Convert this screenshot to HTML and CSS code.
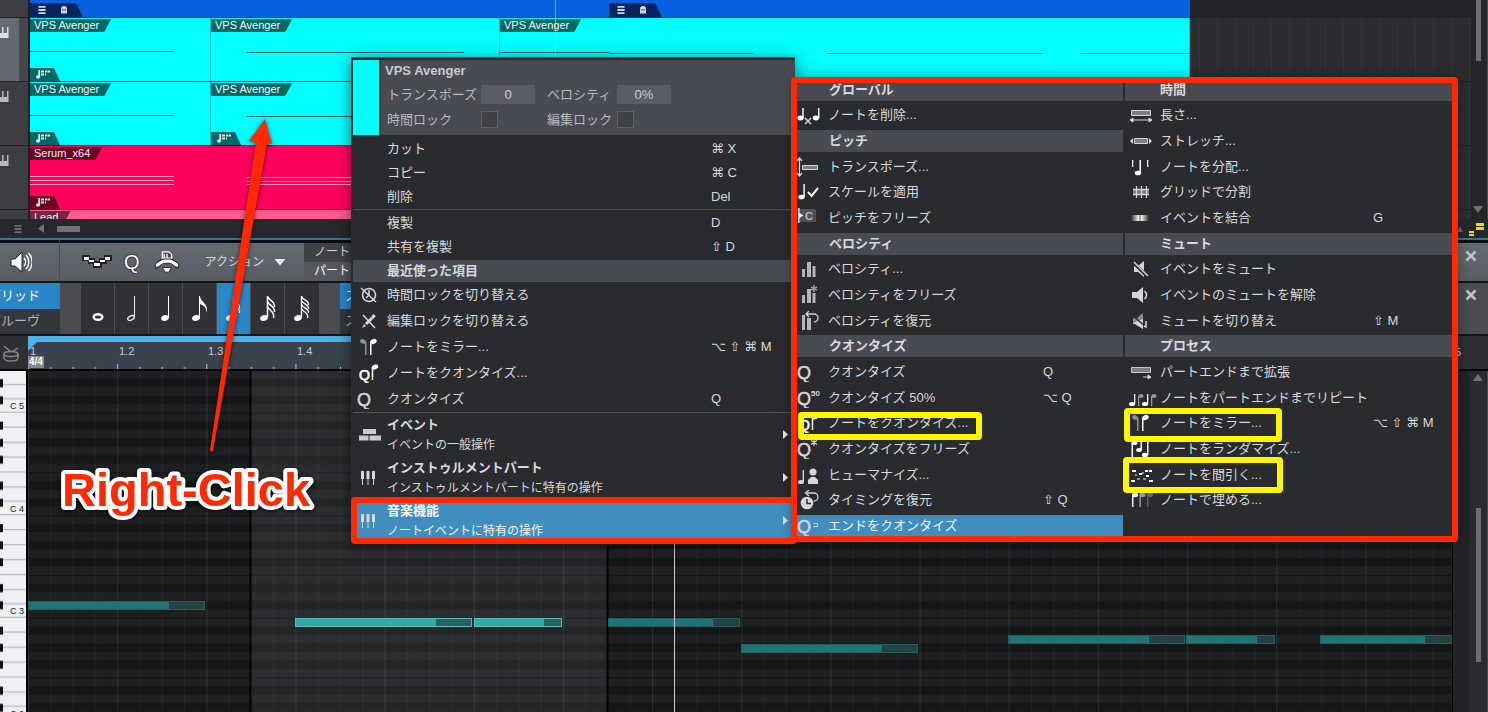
FILE: index.html
```html
<!DOCTYPE html>
<html lang="ja">
<head>
<meta charset="utf-8">
<title>ノートエディター</title>
<link rel="stylesheet" href="styles.css">
</head>
<body>
<svg class="defs" aria-hidden="true">
  <defs>
    <symbol id="i-keys" viewBox="0 0 9 11"><path d="M0 6h2V0h1.500v6h3.500V0h1.500v11H0z" fill="currentColor"/></symbol>
    <symbol id="i-list" viewBox="0 0 8 9"><path d="M0 0h8v2H0zM0 3.500h8v2H0zM0 7h8v2H0z" fill="currentColor"/></symbol>
    <symbol id="i-ghost" viewBox="0 0 6 8"><path d="M0 8V3a3 3 0 0 1 6 0v5L4.500 7 3 8 1.500 7z" fill="currentColor"/><path d="M1.500 3h1v1.500h-1zM3.500 3h1v1.500h-1z" fill="#03265f"/></symbol>
    <symbol id="i-part" viewBox="0 0 14 9"><ellipse cx="2" cy="7" rx="2" ry="1.700" fill="currentColor"/><path d="M3.200 7V0M5 1.500h3M5 4.500h3M9 1.500h2M11.500 1.500h2.500M9 4.500h1" stroke="currentColor" stroke-width="1.800" fill="none"/></symbol>
    <symbol id="i-q" viewBox="0 0 24 20"><text x="0" y="17" class="q">Q</text></symbol>
    <symbol id="i-q50" viewBox="0 0 24 20"><text x="0" y="17" class="q">Q</text><text x="14" y="8" class="q-sup">50</text></symbol>
    <symbol id="i-qstar" viewBox="0 0 24 20"><text x="0" y="17" class="q">Q</text><path d="M17 0v7M14 1.500l6 4M20 1.500l-6 4" stroke="currentColor" stroke-width="1.200"/></symbol>
    <symbol id="i-qend" viewBox="0 0 24 20"><text x="0" y="17" class="q">Q</text><path d="M16.500 7.500h4v3h-4" fill="none" stroke="currentColor"/></symbol>
    <symbol id="i-qnote" viewBox="0 0 24 20"><text x="2" y="17" class="q-small">Q</text><path d="M15.500 17V4" stroke="#fff" stroke-width="1.500"/><ellipse cx="18" cy="4" rx="3.300" ry="2.300" fill="#fff" transform="rotate(-20 18 4)"/></symbol>
    <symbol id="i-clock-off" viewBox="0 0 24 20"><g fill="none" stroke="currentColor" stroke-width="1.500"><circle cx="12" cy="10" r="6.500"/><path d="M12 5v5l-3 3M4 3l15 14"/></g></symbol>
    <symbol id="i-edit-off" viewBox="0 0 24 20"><path d="M6 4l12 13" stroke="currentColor" stroke-width="1.500"/><path d="M9 13l6-6" stroke="currentColor" stroke-width="3"/><path d="M16 3l3 2-3 3-2-2zM5 17l2-4 2 2z" fill="currentColor"/></symbol>
    <symbol id="i-mirror" viewBox="0 0 24 20"><g fill="#8f9094"><ellipse cx="6" cy="4.500" rx="3" ry="2.200" transform="rotate(20 6 4.500)"/><path d="M8 5h1.500v13H8z"/></g><g fill="#fff"><ellipse cx="16.500" cy="4.500" rx="3.300" ry="2.500" transform="rotate(-20 16.500 4.500)"/><path d="M13 5h1.500v13H13z"/></g></symbol>
    <symbol id="i-bricks" viewBox="0 0 24 20"><path d="M6 4h13v5H6zM2 10.500h9.500v5H2zM12.500 10.500H24v5H12.500z" fill="#c9cacd"/></symbol>
    <symbol id="i-pins" viewBox="0 0 24 20"><path d="M4 3h3v8H6v6H5v-6H4zM9.500 3h3v8h-1v6h-1v-6h-1zM15 3h3v8h-1v6h-1v-6h-1z" fill="currentColor"/></symbol>
    <symbol id="i-delete-note" viewBox="0 0 24 20"><g fill="#fff"><ellipse cx="3.500" cy="13" rx="3.200" ry="2.400"/><path d="M5.300 3h1.400v10H5.300z"/><ellipse cx="19" cy="13" rx="3.200" ry="2.400"/><path d="M21 3h1.400v10H21z"/></g><path d="M8 13l6 6M14 13l-6 6" stroke="#d5d6d8" stroke-width="1.500"/></symbol>
    <symbol id="i-transpose" viewBox="0 0 24 20"><path d="M2.500 1v18M0 4l2.500-3L5 4M0 16l2.500 3L5 16" fill="none" stroke="currentColor" stroke-width="1.200"/><path d="M5.500 8.500h15v4h-15z" fill="#7d7e82" stroke="#d5d6d8"/></symbol>
    <symbol id="i-scale" viewBox="0 0 24 20"><g fill="#fff"><ellipse cx="4.500" cy="15" rx="3.200" ry="2.300"/><path d="M6.400 2h1.400v13H6.400z"/></g><path d="M11 10l3.500 4L21 6" fill="none" stroke="#fff" stroke-width="2"/></symbol>
    <symbol id="i-pitch-freeze" viewBox="0 0 24 20"><path d="M2 1h17v13H2z" fill="#505258"/><path d="M1 0h1.500v15H1zM2.500 5l4 2.500-4 2.500z" fill="#eee"/><text x="8" y="12" class="q-mini">C</text></symbol>
    <symbol id="i-bars" viewBox="0 0 24 20"><path d="M5 10h3v8H5zM10 3h4v15h-4zM15.500 7h3v11h-3z" fill="#b5b6b9"/></symbol>
    <symbol id="i-bars-star" viewBox="0 0 24 20"><path d="M5 10h3v8H5zM10 4h4v14h-4zM15.500 8h3v10h-3z" fill="#b5b6b9"/><path d="M17 0v7M14 2l6 3M20 2l-6 3" stroke="#a0a1a4" stroke-width="1.500"/></symbol>
    <symbol id="i-bars-undo" viewBox="0 0 24 20"><path d="M5 4h3v15H5zM10 7h4v12h-4z" fill="#b5b6b9"/><path d="M9 3h8a4 4 0 0 1 0 8M12 0L9 3l3 3" fill="none" stroke="currentColor" stroke-width="1.300"/></symbol>
    <symbol id="i-human" viewBox="0 0 24 20"><g fill="currentColor"><ellipse cx="4" cy="17" rx="3" ry="2"/><path d="M5.600 5H7v12H5.600z"/><circle cx="16" cy="7" r="3.500"/><path d="M11 19v-4l3-3h4l3 3v4z"/></g></symbol>
    <symbol id="i-time-undo" viewBox="0 0 24 20"><circle cx="10" cy="13" r="6.300" fill="currentColor"/><path d="M10 9v4.500h4" fill="none" stroke="#292b2e" stroke-width="1.500"/><path d="M10 3h7a4 4 0 0 1 0 8M12 0L8.500 3 12 6" fill="none" stroke="currentColor" stroke-width="1.300"/></symbol>
    <symbol id="i-length" viewBox="0 0 24 20"><path d="M2.500 5.500h19v5h-19z" fill="#7d7e82" stroke="#d5d6d8"/><path d="M3 15h18M4 13l-3 2 3 2zM20 13l3 2-3 2z" fill="currentColor" stroke="currentColor"/></symbol>
    <symbol id="i-stretch" viewBox="0 0 24 20"><path d="M5.500 7.500h13v5h-13z" fill="#7d7e82" stroke="#d5d6d8"/><path d="M4 7l-3 3 3 3zM20 7l3 3-3 3z" fill="currentColor"/></symbol>
    <symbol id="i-distribute" viewBox="0 0 24 20"><path d="M3 3h1.300v7H3zM18 3h1.300v7H18zM10.500 3H12v13h-1.500z" fill="#fff"/><ellipse cx="9" cy="16" rx="3.200" ry="2.300" fill="#fff"/></symbol>
    <symbol id="i-split" viewBox="0 0 24 20"><path d="M4 7h16v6H4z" fill="#77787c"/><path d="M4 7.500h16M4 12.500h16M7.500 4v12M12.500 4v12M17.500 4v12" stroke="currentColor" stroke-width="1.300"/></symbol>
    <linearGradient id="g-merge"><stop offset="0" stop-color="#292b2e"/><stop offset=".45" stop-color="#fff"/><stop offset=".55" stop-color="#fff"/><stop offset="1" stop-color="#292b2e"/></linearGradient>
    <symbol id="i-merge" viewBox="0 0 24 20"><path d="M2 7h18v6H2z" fill="url(#g-merge)"/><path d="M11 6v8" stroke="#444"/></symbol>
    <symbol id="i-mute" viewBox="0 0 24 20"><path d="M5 7h4l6-5v16l-6-5H5z" fill="currentColor"/><path d="M4 3l15 15" stroke="#292b2e" stroke-width="3.500"/><path d="M5 3l14 14" stroke="currentColor" stroke-width="1.500"/></symbol>
    <symbol id="i-unmute" viewBox="0 0 24 20"><path d="M3 7h5l6-5v16l-6-5H3z" fill="currentColor"/><path d="M15.500 6a5 5 0 0 1 0 8" fill="none" stroke="currentColor" stroke-width="1.500"/></symbol>
    <symbol id="i-mute-toggle" viewBox="0 0 24 20"><path d="M4 7h4l6-5v16l-6-5H4z" fill="#898a8e"/><path d="M4 12l10 6V8z" fill="#d5d6d8"/><path d="M3 4l14 12" stroke="#292b2e" stroke-width="1.500"/><path d="M17 10v6l-2-1" fill="none" stroke="#d5d6d8" stroke-width="1.500"/></symbol>
    <symbol id="i-extend" viewBox="0 0 24 20"><path d="M2.500 5.500h19v5h-19z" fill="#7d7e82" stroke="#c5c6c8"/><path d="M14 15h7M19 13l3 2-3 2z" stroke="currentColor" fill="currentColor"/></symbol>
    <symbol id="i-repeat" viewBox="0 0 28 20"><g fill="#fff"><ellipse cx="3" cy="16" rx="3" ry="2"/><path d="M5 6h1.300v10H5z"/><ellipse cx="16" cy="16" rx="3" ry="2"/><path d="M18 6h1.300v10H18z"/></g><g fill="#98999c"><ellipse cx="12" cy="8" rx="2.500" ry="2"/><path d="M9 8h1.300v10H9z"/><ellipse cx="25" cy="8" rx="2.500" ry="2"/><path d="M22 8h1.300v10H22z"/></g></symbol>
    <symbol id="i-random" viewBox="0 0 24 20"><g fill="#fff"><ellipse cx="5.500" cy="4" rx="3" ry="2"/><path d="M2.500 4H4v14H2.500z"/><ellipse cx="10" cy="11" rx="2.800" ry="2"/><path d="M11.500 3H13v8h-1.500z"/><ellipse cx="16" cy="16" rx="3" ry="2.200"/><path d="M18 3h1.500v13H18z"/></g></symbol>
    <symbol id="i-thin" viewBox="0 0 24 20"><path d="M3 5h4v2H3zM16 5h3v2h-3zM20 5h3v2h-3zM10 8h3v2h-3zM17 10h3v2h-3zM2 15h4v2H2zM20 15h4v2h-4z" fill="#fff"/><path d="M6 9h2v2H6zM8 13h3v2H8zM14 13h3v2h-3zM13 7h2v2h-2z" fill="#8b8c90"/></symbol>
    <symbol id="i-fill" viewBox="0 0 24 20"><g fill="#fff"><ellipse cx="6" cy="5" rx="3" ry="2.200"/><path d="M3 5h1.400v12H3z"/></g><g fill="#9a9b9e"><ellipse cx="13.500" cy="5" rx="3" ry="2.200"/><path d="M10.500 5h1.400v12h-1.400z"/></g><g fill="#626367"><ellipse cx="21" cy="5" rx="3" ry="2.200"/><path d="M18 5h1.400v12H18z"/></g></symbol>
  </defs>
</svg>

<main class="app">
  <section class="arrange" aria-label="アレンジ">
    <div class="tracks">
      <div class="track track-top"><div class="track-head"></div>
        <div class="lane">
          <div class="clip clip-blue clip-whole"></div>
          <div class="fold fold-a"><svg class="g-list"><use href="#i-list"/></svg><svg class="g-ghost"><use href="#i-ghost"/></svg></div>
          <div class="fold fold-b"><svg class="g-list"><use href="#i-list"/></svg><svg class="g-ghost"><use href="#i-ghost"/></svg></div>
        </div></div>
      <div class="track"><div class="track-head selected"><svg><use href="#i-keys"/></svg></div>
        <div class="lane">
          <div class="clip clip-cyan clip-1"><span class="name">VPS Avenger</span><i class="corner"><svg><use href="#i-part"/></svg></i></div>
          <div class="clip clip-cyan clip-2"><span class="name">VPS Avenger</span></div>
          <div class="clip clip-cyan clip-3"><span class="name">VPS Avenger</span></div>
          <svg class="lines"><path d="M0 33.500h144M217 34.500h217M470 34.500h109M579 35.500h145M797 35.500h216M1050 35.500h110" stroke="#0a6767"/></svg>
        </div></div>
      <div class="track"><div class="track-head"><svg><use href="#i-keys"/></svg></div>
        <div class="lane">
          <div class="clip clip-cyan clip-1"><span class="name">VPS Avenger</span><i class="corner"><svg><use href="#i-part"/></svg></i></div>
          <div class="clip clip-cyan clip-rest"><span class="name">VPS Avenger</span><i class="corner"><svg><use href="#i-part"/></svg></i></div>
          <svg class="lines"><path d="M0 33.500h144M217 34.500h217" stroke="#0a6767"/></svg>
        </div></div>
      <div class="track"><div class="track-head"><svg><use href="#i-keys"/></svg></div>
        <div class="lane">
          <div class="clip clip-pink clip-whole"><span class="name">Serum_x64</span><i class="corner"><svg><use href="#i-part"/></svg></i></div>
          <svg class="lines"><path d="M0 30.500h144M0 34.500h144M0 38.500h144M217 31.500h217M217 35.500h217M217 38.500h217" stroke="#ff9fc0"/></svg>
        </div></div>
      <div class="track track-last"><div class="track-head"></div>
        <div class="lane"><div class="clip clip-rose clip-whole"><span class="name">Lead</span></div></div></div>
      <i class="playhead playhead-top"></i>
    </div>
    <div class="vscroll"><i class="thumb"></i><i class="tri-down"></i></div>
  </section>
  <div class="hscroll">
    <svg class="g-list"><use href="#i-list"/></svg><i class="tri-left"></i><i class="thumb"></i>
    <svg class="zoomers" viewBox="0 0 30 18"><path d="M0 12l3-6 3 6z" fill="#66686c"/><path d="M19 3h8v3h-8zM19 7h8v3h-8zM12 11h5v2h-5zM12 14h5v2h-5z" fill="#f3d90b"/></svg>
  </div>

  <header class="toolbar">
    <button class="tool tool-speaker" aria-label="試聴"><svg viewBox="0 0 22 22"><path d="M1 8h4l7-7v20l-7-6H1z" fill="#fff" stroke="#222"/><path d="M14 7a6 6 0 0 1 0 8M16 4a10 10 0 0 1 0 14M18.500 2a13 13 0 0 1 0 18" fill="none" stroke="#fff" stroke-width="1.400"/></svg></button>
    <div class="tool-group">
      <button class="tool" aria-label="ステップ"><svg viewBox="0 0 30 22"><path d="M0 4h8v3h5v3h4V7h5V4h8v6h-5v3h-5v4h-9v-4H6v-3H0z" fill="#222"/><path d="M2 6h5v3H2zM7 9h5v2H7zM12 12h6v3h-6zM18 9h5v2h-5zM23 6h5v3h-5z" fill="#fff"/></svg></button>
      <button class="tool tool-q" aria-label="クオンタイズ">Q</button>
      <button class="tool" aria-label="ハンガー"><svg viewBox="0 0 26 26"><path d="M8 2h7l3 3v4H8zM10 4v4M13 4v4" fill="#444" stroke="#fff" stroke-width="1.500"/><path d="M0 18c4-1 5-6 9-6h8c4 0 5 5 9 6" fill="none" stroke="#222" stroke-width="5.500"/><path d="M1 17c4-1 5-5 9-5h6c4 0 5 4 9 5" fill="none" stroke="#fff" stroke-width="3.500"/><path d="M8 19h10l-3 5h-4z" fill="#fff" stroke="#222"/></svg></button>
      <button class="action">アクション<i class="tri-down"></i></button>
    </div>
    <div class="tabs"><button>ノート</button><button class="active">パート</button></div>
    <button class="close" aria-label="閉じる"><svg viewBox="0 0 12 12"><path d="M1.500 1.500l9 9M10.500 1.500l-9 9"/></svg></button>
  </header>

  <div class="values">
    <div class="modes"><button class="active">グリッド</button><button>グルーヴ</button></div>
    <div class="notes">
      <button aria-label="全音符"><svg viewBox="0 0 24 32"><ellipse cx="12" cy="24" rx="4.300" ry="2.800" fill="none" stroke="#fff" stroke-width="2.400"/></svg></button>
      <button aria-label="2分音符"><svg viewBox="0 0 24 32"><ellipse cx="11" cy="25" rx="3.500" ry="2" fill="none" stroke="#e8e8e8" stroke-width="1.300" transform="rotate(-25 11 25)"/><path d="M14.500 24V3" stroke="#e8e8e8"/></svg></button>
      <button aria-label="4分音符"><svg viewBox="0 0 24 32"><ellipse cx="11" cy="25" rx="4" ry="2.800" fill="#fff" transform="rotate(-20 11 25)"/><path d="M14.500 24V3" stroke="#fff"/></svg></button>
      <button aria-label="8分音符"><svg viewBox="0 0 24 32"><ellipse cx="8" cy="25" rx="4" ry="2.800" fill="#fff" transform="rotate(-20 8 25)"/><path d="M11.500 24V3" stroke="#fff"/><path d="M12 3c0 6 10 8 6 17 1-6-3-8-6-9z" fill="#fff"/></svg></button>
      <button class="active" aria-label="16分音符"><svg viewBox="0 0 24 32"><ellipse cx="8" cy="25" rx="4" ry="2.800" fill="#fff" transform="rotate(-20 8 25)"/><path d="M11.500 24V3c0 5 7 6 6 13M11.500 9c0 5 7 6 6 11" fill="none" stroke="#fff" stroke-width="1.300"/></svg></button>
      <button aria-label="32分音符"><svg viewBox="0 0 24 32"><ellipse cx="8" cy="25" rx="4" ry="2.800" fill="#fff" transform="rotate(-20 8 25)"/><path d="M11.500 24V3c0 4 8 5 7 11M11.500 8c0 4 8 5 7 11M11.500 13c0 4 8 5 6 12" fill="none" stroke="#fff" stroke-width="1.500"/></svg></button>
      <button aria-label="64分音符"><svg viewBox="0 0 24 32"><ellipse cx="8" cy="25" rx="4" ry="2.800" fill="#fff" transform="rotate(-20 8 25)"/><path d="M11.500 24V3c0 4 8 4 7 9M11.500 7c0 4 8 4 7 9M11.500 11c0 4 8 4 7 9M11.500 15c0 4 8 4 6 10" fill="none" stroke="#fff" stroke-width="1.300"/></svg></button>
    </div>
    <div class="modes modes-next"><button class="active">ス</button><button>ス</button></div>
    <button class="close" aria-label="閉じる"><svg viewBox="0 0 12 12"><path d="M1.500 1.500l9 9M10.500 1.500l-9 9"/></svg></button>
  </div>

  <div class="ruler">
    <div class="ruler-head"><svg viewBox="0 0 18 18"><g fill="none" stroke="#85878b" stroke-width="1.400"><ellipse cx="9" cy="10" rx="7" ry="2.500"/><path d="M2 10v4c0 4 14 4 14 0v-4M2 2l7 6M16 4L9 8"/></g></svg></div>
    <div class="ruler-scale">
      <svg class="ticks"><defs><pattern id="p-tick" width="89.150" height="34" patternUnits="userSpaceOnUse"><path d="M.500 28v6M22.800 31v3M45.100 31v3M67.400 31v3" stroke="#c4c8ce"/></pattern></defs><rect width="100%" height="100%" fill="url(#p-tick)"/><path d="M0 6h9L0 15z" fill="#4db0e8"/></svg>
      <span class="beat beat-1">1</span><span class="beat">1.2</span><span class="beat">1.3</span><span class="beat">1.4</span>
      <span class="meter">4/4</span>
    </div>
    <div class="ruler-end">5</div>
  </div>

  <section class="roll" aria-label="ピアノロール">
    <svg class="keyboard">
      <defs><pattern id="p-keys" width="28" height="102.500" patternUnits="userSpaceOnUse" patternTransform="translate(0 41.700)">
        <rect width="28" height="102.500" fill="#eef0f3"/>
        <path d="M0 14.500h28M0 29.500h28M0 44.500h28M0 59.500h28M0 74.500h28M0 88.500h28M0 102h28" stroke="#a9abb0"/>
        <path d="M0 9h3v8H0zM0 26h3v8H0zM0 43h3v8H0zM0 69h3v8H0zM0 86h3v8H0z" fill="#111"/></pattern></defs>
      <rect width="100%" height="100%" fill="url(#p-keys)"/>
      <g class="octave"><text x="10" y="38">C 5</text><text x="10" y="141">C 4</text><text x="10" y="243">C 3</text><text x="10" y="346">C 2</text></g>
    </svg>
    <div class="canvas">
      <svg class="grid">
        <defs>
          <pattern id="p-rows" width="22.290" height="12" patternUnits="userSpaceOnUse" patternTransform="translate(0 41.700) scale(1 8.540)">
            <rect width="23" height="12" fill="#1e1f21"/>
            <path d="M0 1h23v1H0zM0 3h23v1H0zM0 5h23v1H0zM0 8h23v1H0zM0 10h23v1H0z" fill="#151617"/>
            <path d="M0 0h23v.150H0zM0 7h23v.100H0z" fill="#121314"/>
            <path d="M0 0h1v12H0z" fill="#fff" fill-opacity=".03"/>
          </pattern>
          <pattern id="p-beats" width="89.150" height="10" patternUnits="userSpaceOnUse"><path d="M0 0h1v10H0z" fill="#fff" fill-opacity=".05"/></pattern>
        </defs>
        <rect width="100%" height="100%" fill="url(#p-rows)"/>
        <rect x="223" width="356" height="100%" fill="#eef" fill-opacity=".07"/>
        <rect width="100%" height="100%" fill="url(#p-beats)"/>
        <path d="M222.500 0v2000M579.500 0v2000" stroke="#000" stroke-width="2"/>
      </svg>
      <i class="note n1"></i><i class="note bright n2"></i><i class="note bright n3"></i><i class="note n4"></i>
      <i class="note n5"></i><i class="note n6"></i><i class="note n7"></i><i class="note n8"></i>
      <i class="playhead playhead-roll"></i>
    </div>
    <div class="vscroll"><i class="tri-up"></i><i class="thumb"></i></div>
  </section>

  <nav class="menu main-menu" aria-label="コンテキストメニュー">
    <form class="info">
      <i class="swatch"></i>
      <div class="info-body">
        <strong class="info-title">VPS Avenger</strong>
        <div class="fields">
          <label for="transpose">トランスポーズ</label><input id="transpose" type="text" value="0">
          <label for="velocity">ベロシティ</label><input id="velocity" type="text" value="0%">
          <label for="timelock">時間ロック</label><input id="timelock" type="checkbox">
          <label for="editlock">編集ロック</label><input id="editlock" type="checkbox">
        </div>
      </div>
    </form>
    <div class="group tight">
      <button class="item"><span class="label">カット</span><kbd>⌘ X</kbd></button>
      <button class="item"><span class="label">コピー</span><kbd>⌘ C</kbd></button>
      <button class="item"><span class="label">削除</span><kbd>Del</kbd></button>
    </div>
    <div class="group tight ruled">
      <button class="item"><span class="label">複製</span><kbd>D</kbd></button>
      <button class="item"><span class="label">共有を複製</span><kbd>⇧ D</kbd></button>
    </div>
    <h2 class="section">最近使った項目</h2>
    <div class="group">
      <button class="item"><svg><use href="#i-clock-off"/></svg><span class="label">時間ロックを切り替える</span></button>
      <button class="item"><svg><use href="#i-edit-off"/></svg><span class="label">編集ロックを切り替える</span></button>
      <button class="item"><svg><use href="#i-mirror"/></svg><span class="label">ノートをミラー...</span><kbd>⌥ ⇧ ⌘ M</kbd></button>
      <button class="item"><svg><use href="#i-qnote"/></svg><span class="label">ノートをクオンタイズ...</span></button>
      <button class="item"><svg><use href="#i-q"/></svg><span class="label">クオンタイズ</span><kbd>Q</kbd></button>
    </div>
    <div class="group ruled">
      <button class="item tall"><svg><use href="#i-bricks"/></svg><span class="label"><b>イベント</b><small>イベントの一般操作</small></span><i class="tri-right"></i></button>
      <button class="item tall"><svg><use href="#i-pins"/></svg><span class="label"><b>インストゥルメントパート</b><small>インストゥルメントパートに特有の操作</small></span><i class="tri-right"></i></button>
      <button class="item tall current"><svg><use href="#i-pins"/></svg><span class="label"><b>音楽機能</b><small>ノートイベントに特有の操作</small></span><i class="tri-right"></i></button>
    </div>
  </nav>

  <nav class="menu sub-menu" aria-label="音楽機能">
    <div class="column">
      <h2 class="section">グローバル</h2>
      <button class="item"><svg><use href="#i-delete-note"/></svg><span class="label">ノートを削除...</span></button>
      <h2 class="section">ピッチ</h2>
      <button class="item"><svg><use href="#i-transpose"/></svg><span class="label">トランスポーズ...</span></button>
      <button class="item"><svg><use href="#i-scale"/></svg><span class="label">スケールを適用</span></button>
      <button class="item"><svg><use href="#i-pitch-freeze"/></svg><span class="label">ピッチをフリーズ</span></button>
      <h2 class="section">ベロシティ</h2>
      <button class="item"><svg><use href="#i-bars"/></svg><span class="label">ベロシティ...</span></button>
      <button class="item"><svg><use href="#i-bars-star"/></svg><span class="label">ベロシティをフリーズ</span></button>
      <button class="item"><svg><use href="#i-bars-undo"/></svg><span class="label">ベロシティを復元</span></button>
      <h2 class="section">クオンタイズ</h2>
      <button class="item"><svg><use href="#i-q"/></svg><span class="label">クオンタイズ</span><kbd>Q</kbd></button>
      <button class="item"><svg><use href="#i-q50"/></svg><span class="label">クオンタイズ 50%</span><kbd>⌥ Q</kbd></button>
      <button class="item"><svg><use href="#i-qnote"/></svg><span class="label">ノートをクオンタイズ...</span></button>
      <button class="item"><svg><use href="#i-qstar"/></svg><span class="label">クオンタイズをフリーズ</span></button>
      <button class="item"><svg><use href="#i-human"/></svg><span class="label">ヒューマナイズ...</span></button>
      <button class="item"><svg><use href="#i-time-undo"/></svg><span class="label">タイミングを復元</span><kbd>⇧ Q</kbd></button>
      <button class="item current"><svg><use href="#i-qend"/></svg><span class="label">エンドをクオンタイズ</span></button>
    </div>
    <div class="column">
      <h2 class="section">時間</h2>
      <button class="item"><svg><use href="#i-length"/></svg><span class="label">長さ...</span></button>
      <button class="item"><svg><use href="#i-stretch"/></svg><span class="label">ストレッチ...</span></button>
      <button class="item"><svg><use href="#i-distribute"/></svg><span class="label">ノートを分配...</span></button>
      <button class="item"><svg><use href="#i-split"/></svg><span class="label">グリッドで分割</span></button>
      <button class="item"><svg><use href="#i-merge"/></svg><span class="label">イベントを結合</span><kbd>G</kbd></button>
      <h2 class="section">ミュート</h2>
      <button class="item"><svg><use href="#i-mute"/></svg><span class="label">イベントをミュート</span></button>
      <button class="item"><svg><use href="#i-unmute"/></svg><span class="label">イベントのミュートを解除</span></button>
      <button class="item"><svg><use href="#i-mute-toggle"/></svg><span class="label">ミュートを切り替え</span><kbd>⇧ M</kbd></button>
      <h2 class="section">プロセス</h2>
      <button class="item"><svg><use href="#i-extend"/></svg><span class="label">パートエンドまで拡張</span></button>
      <button class="item"><svg class="wide"><use href="#i-repeat"/></svg><span class="label">ノートをパートエンドまでリピート</span></button>
      <button class="item"><svg><use href="#i-mirror"/></svg><span class="label">ノートをミラー...</span><kbd>⌥ ⇧ ⌘ M</kbd></button>
      <button class="item"><svg><use href="#i-random"/></svg><span class="label">ノートをランダマイズ...</span></button>
      <button class="item"><svg><use href="#i-thin"/></svg><span class="label">ノートを間引く...</span></button>
      <button class="item"><svg><use href="#i-fill"/></svg><span class="label">ノートで埋める...</span></button>
    </div>
  </nav>

  <i class="mark mark-sub"></i><i class="mark mark-item"></i>
  <i class="mark yellow mark-quantize"></i><i class="mark yellow mark-mirror"></i><i class="mark yellow mark-thin"></i>
  <svg class="callout" viewBox="0 0 360 420">
    <path class="arrow" d="M265 19L272 44 267 43 213 351Q211 353 210 350L256 42 249 41z"/>
    <text x="62" y="406">Right-Click</text>
  </svg>
</main>
</body>
</html>
```
FILE: styles.css
```css
* { box-sizing: border-box; }

body {
  margin: 0;
  background: #1e1f21;
  color: #d8d9db;
  font: 13px/20px "Liberation Sans", "Noto Sans CJK JP", sans-serif;
}

button {
  margin: 0;
  padding: 0;
  border: 0;
  background: none;
  color: inherit;
  font: inherit;
  text-align: left;
}

h2 { margin: 0; font-size: 13px; }
i { display: block; font-style: normal; }
svg { display: block; flex: none; }
.defs { position: absolute; width: 0; height: 0; }

.app {
  position: relative;
  display: flex;
  flex-direction: column;
  min-height: 100vh;
  overflow: hidden;
}

/* Triangles */
.tri-down, .tri-up, .tri-left, .tri-right { background: #707276; }
.tri-down { width: 10px; height: 7px; clip-path: polygon(0 0, 100% 0, 50% 100%); }
.tri-up { width: 10px; height: 7px; clip-path: polygon(50% 0, 100% 100%, 0 100%); }
.tri-left { width: 6px; height: 9px; clip-path: polygon(0 50%, 100% 0, 100% 100%); }
.tri-right { width: 5px; height: 9px; background: #e2e2e4; clip-path: polygon(0 0, 100% 50%, 0 100%); }

/* Arrangement */
.arrange { display: flex; height: 219px; background: #2c2d30; }
.tracks { position: relative; flex: 1; display: flex; flex-direction: column; overflow: hidden; }
.track { display: flex; height: 64px; border-bottom: 1px solid #16282c; }
.track-top { height: 18px; }
.track-last { flex: 1; border: 0; }
.track-head {
  width: 30px;
  padding-top: 9px;
  border-right: 2px solid #1d1e20;
  background: #3c3e42;
  color: #b9babd;
}
.track-head svg { width: 9px; height: 11px; }
.track-head.selected {
  background: linear-gradient(90deg, #656971 19px, #45474c 19px);
  color: #dedfe1;
}
.lane {
  position: relative;
  flex: 1;
  background: repeating-linear-gradient(90deg, #2c2d30 0 17px, #333437 17px 18px);
}
.track-top .lane { background: #242528; }
.clip { position: absolute; top: 0; bottom: 0; overflow: hidden; }
.clip-whole { left: 0; width: 1160px; }
.clip-1 { left: 0; width: 181px; }
.clip-2 { left: 181px; width: 289px; }
.clip-3 { left: 470px; width: 690px; }
.clip-rest { left: 181px; width: 979px; }
.clip-blue { background: #0662e0; }
.clip-cyan { background: #04fdff; border-right: 1px solid #07bcc0; --tab: #046867; }
.clip-pink { background: #ff005c; --tab: #6b0026; }
.clip-rose { background: #ff5a92; --tab: #72263f; }
.name {
  display: block;
  width: max-content;
  height: 13px;
  margin-top: 1px;
  padding: 0 12px 0 4px;
  background: var(--tab);
  color: #f1f5f5;
  font-size: 11px;
  line-height: 13px;
  clip-path: polygon(0 0, 100% 0, calc(100% - 7px) 100%, 0 100%);
}
.corner {
  position: absolute;
  left: 0;
  bottom: 0;
  width: 30px;
  height: 13px;
  padding: 2px 6px;
  background: var(--tab);
  color: #dfe8e8;
  clip-path: polygon(0 0, 24px 0, 100% 100%, 0 100%);
}
.corner svg { width: 14px; height: 9px; }
.lines { position: absolute; inset: 0; width: 100%; height: 100%; }
.fold {
  position: absolute;
  bottom: 0;
  display: flex;
  align-items: center;
  gap: 15px;
  width: 53px;
  height: 14px;
  padding-left: 8px;
  background: #03265f;
  color: #d2d6de;
  clip-path: polygon(0 0, 46px 0, 100% 100%, 0 100%);
}
.fold-a { left: 0; }
.fold-b { left: 579px; }
.g-list { width: 8px; height: 8px; }
.g-ghost { width: 6px; height: 8px; }
.playhead { position: absolute; top: 0; bottom: 0; width: 1px; background: #c9cacc; }
.playhead-top { left: 555px; opacity: .7; }
.playhead-roll { left: 646px; }

.vscroll {
  display: flex;
  flex-direction: column;
  align-items: flex-end;
  width: 17px;
  padding: 0 4px 2px 0;
  border-right: 1px solid #4a4b4f;
  background: #25262a;
}
.vscroll .thumb { width: 5px; height: 61px; margin-right: 2px; background: #6d6e73; }
.vscroll .tri-down { margin-top: auto; margin-bottom: 4px; }

.hscroll {
  display: flex;
  align-items: center;
  gap: 16px;
  height: 19px;
  padding: 0 1px 0 14px;
  background: #27282b;
  color: #6b6d71;
}
.hscroll .thumb { width: 23px; height: 6px; background: #707276; margin-left: -3px; }
.zoomers { width: 30px; height: 18px; margin-left: auto; }

/* Editor toolbar */
.toolbar {
  display: flex;
  height: 45px;
  border-top: 2px solid #3b7390;
  border-bottom: 2px solid #141517;
  background: linear-gradient(#0c0d0f 3px, #656971 3px, #585c63);
}
.tool-speaker { width: 60px; padding: 3px 0 0 10px; border-right: 1px solid #484b50; }
.tool-speaker svg { width: 22px; height: 22px; }
.tool-group { display: flex; align-items: center; padding: 3px 0 0 22px; gap: 12px; width: 244px; }
.tool-group svg { width: 30px; height: 24px; }
.tool-q {
  color: #fff;
  font-size: 20px;
  text-shadow: 0 0 2px #111, 0 0 1px #111;
}
.action { display: flex; align-items: center; gap: 10px; padding-left: 11px; white-space: nowrap; font-size: 12px; }
.action .tri-down { background: #e7e8ea; width: 12px; }
.tabs { display: flex; flex-direction: column; width: 60px; margin-top: 3px; background: #3f4145; }
.tabs button { flex: 1; padding-left: 10px; font-size: 12px; line-height: 17px; }
.tabs .active { background: #55585e; color: #fff; }
.close {
  display: flex;
  align-items: flex-start;
  width: 30px;
  margin-left: auto;
  padding: 6px 0 0 7px;
}
.toolbar .close { padding-top: 10px; }
.close svg { width: 12px; height: 12px; stroke: #c3c4c7; stroke-width: 2.5px; }

/* Note values */
.values {
  display: flex;
  height: 53px;
  border-bottom: 2px solid #151618;
  background: #4a4c52;
}
.modes { display: flex; flex-direction: column; width: 60px; }
.modes button {
  flex: 1;
  display: flex;
  justify-content: flex-end;
  align-items: center;
  padding-right: 20px;
  overflow: hidden;
  background: #34373b;
  white-space: nowrap;
  color: #b5b6b9;
}
.modes .active { background: #2a86c6; color: #fff; }
.modes-next button { justify-content: flex-start; padding: 0 0 0 5px; }
.notes { display: flex; gap: 1px; margin: 0 21px; }
.notes button {
  display: grid;
  place-items: center;
  width: 33px;
  background: #2f3135;
}
.notes button:last-child { width: 34px; }
.notes .active { background: #2a86c6; }
.notes svg { width: 24px; height: 32px; }

/* Ruler */
.ruler { display: flex; height: 35px; border-bottom: 2px solid #050506; background: #2d2f33; }
.ruler-head { width: 28px; padding: 8px 0 0 2px; }
.ruler-head svg { width: 18px; height: 18px; }
.ruler-scale {
  position: relative;
  flex: 1;
  display: grid;
  grid-template-columns: repeat(4, 89px) 1fr;
  padding-top: 6px;
  background: linear-gradient(#4db0e8 6px, #3a424e 6px);
  font-size: 11px;
}
.ticks { position: absolute; inset: 0; width: 100%; height: 100%; }
.beat { position: relative; padding-left: 2px; line-height: 18px; color: #c8cace; }
.meter {
  position: absolute;
  left: 0;
  bottom: 1px;
  padding: 0 1px;
  background: #85878a;
  color: #fff;
  font: bold 10px/12px "Liberation Sans", sans-serif;
}
.ruler-end { width: 34px; padding: 6px 0 0 1px; font-size: 11px; line-height: 20px; }

/* Piano roll */
.roll { flex: 1; display: flex; min-height: 300px; }
.keyboard { width: 28px; height: auto; border-right: 2px solid #000; }
.octave { fill: #222; font-size: 9px; }
.canvas { position: relative; flex: 1; overflow: hidden; border-right: 1px solid #050506; }
.grid { position: absolute; inset: 0; width: 100%; height: 100%; }
.roll .vscroll { width: 35px; background: linear-gradient(90deg, #222326 16px, #2a2b2f 16px); padding-top: 3px; }
.roll .vscroll .thumb { margin-top: 127px; height: 154px; }

.note {
  position: absolute;
  height: 9px;
  border: 1px solid #24605f;
  background: linear-gradient(90deg, #1f7573 80%, #244241 80%);
}
.note.bright { border-color: #55bcbc; background: linear-gradient(90deg, #35a8a8 80%, #2b6061 80%); }
.n1 { left: 0; top: 230px; width: 177px; }
.n2 { left: 267px; top: 247px; width: 177px; }
.n3 { left: 446px; top: 247px; width: 88px; }
.n4 { left: 580px; top: 247px; width: 132px; }
.n5 { left: 713px; top: 273px; width: 177px; }
.n6 { left: 980px; top: 264px; width: 177px; }
.n7 { left: 1158px; top: 264px; width: 89px; }
.n8 { left: 1292px; top: 264px; width: 132px; }

/* Menus */
.menu { position: absolute; background: #292b2e; box-shadow: 0 3px 14px rgba(0, 0, 0, .5); }
.main-menu { left: 351px; top: 57px; width: 444px; padding: 2px 0 0 2px; border-top: 1px solid #2a3338; }
.info { display: flex; gap: 2px; height: 75px; margin-bottom: 2px; }
.swatch { width: 26px; background: #04fdff; }
.info-body { flex: 1; padding: 1px 0 0 4px; background: #494b52; color: #b9babd; }
.info-title { display: block; font-size: 13px; line-height: 20px; color: #c9cacd; }
.fields {
  display: grid;
  grid-template-columns: 94px 66px 70px 54px;
  grid-auto-rows: 25px;
  align-items: center;
  padding: 1px 2px;
}
.fields input { margin: 0; }
.fields [type="text"] {
  width: 54px;
  height: 19px;
  padding: 0;
  border: 0;
  background: #5a5c63;
  color: #cfd0d3;
  font: inherit;
  text-align: center;
}
.fields [type="checkbox"] {
  appearance: none;
  width: 17px;
  height: 17px;
  border: 1px solid #5d5f65;
  background: #3f4145;
}

.group.ruled { border-top: 1px solid #4d4f53; }
.tight + .ruled { padding: 1px 0; }
.item {
  position: relative;
  display: flex;
  align-items: center;
  width: 100%;
  height: 26px;
  white-space: nowrap;
}
.tight .item { height: 24px; }
.item svg { width: 24px; height: 20px; margin: 0 6px 0 4px; color: #d5d6d8; }
.item .label { flex: 1; }
.tight .label { padding-left: 34px; }
.item kbd { width: 84px; font: 13px/20px "Liberation Sans", "DejaVu Sans", sans-serif; }
.section {
  height: 22px;
  padding-left: 34px;
  background: #494b52;
  line-height: 21px;
}
.item.tall { height: 43px; padding-right: 7px; }
.tall b, .tall small { display: block; line-height: 21px; }
.tall small { font-size: 12px; }
.item.current { background: #408dc0; color: #f3f7fa; }

.sub-menu {
  left: 795px;
  top: 77px;
  width: 660px;
  height: 462px;
  display: grid;
  grid-template-columns: 330px 1fr;
}
.column {
  display: grid;
  grid-template-rows: repeat(18, 1fr);
  align-items: center;
  padding-right: 2px;
}
.column .item { height: 22px; }
.column .item svg { margin: 0 7px 0 2px; }
.column .item svg.wide { width: 28px; margin-right: 3px; }
.column .item kbd { width: 80px; }
.column + .column .item svg { margin-left: 4px; }
.column + .column .section { padding-left: 35px; }
.q { font: 18px "Liberation Sans", sans-serif; fill: currentColor; stroke: currentColor; stroke-width: .5px; }
.q-small { font: 14px "Liberation Sans", sans-serif; fill: #fff; stroke: #fff; stroke-width: .6px; }
.q-sup { font: bold 8px "Liberation Sans", sans-serif; fill: currentColor; }
.q-mini { font: bold 11px "Liberation Sans", sans-serif; fill: #b9babd; }

/* Annotations */
.mark { position: absolute; border: 6px solid #ff2a04; border-radius: 4px; }
.mark-sub { left: 791px; top: 77px; width: 667px; height: 465px; }
.mark-item { left: 351px; top: 497px; width: 446px; height: 47px; }
.mark.yellow { border-color: #fff700; }
.mark-quantize { left: 798px; top: 412px; width: 184px; height: 28px; }
.mark-mirror { left: 1124px; top: 408px; width: 158px; height: 34px; }
.mark-thin { left: 1123px; top: 457px; width: 160px; height: 36px; }
.callout { position: absolute; left: 0; top: 100px; width: 360px; height: 420px; }
.callout text {
  fill: #ff2a04;
  stroke: #fff;
  stroke-width: 8px;
  stroke-linejoin: round;
  paint-order: stroke;
  font: bold 47px "Liberation Sans", sans-serif;
  filter: drop-shadow(0 2px 2px rgba(0, 0, 0, .6));
}
.arrow { fill: #ff2a04; filter: drop-shadow(0 1px 2px rgba(0, 0, 0, .6)); }
```
